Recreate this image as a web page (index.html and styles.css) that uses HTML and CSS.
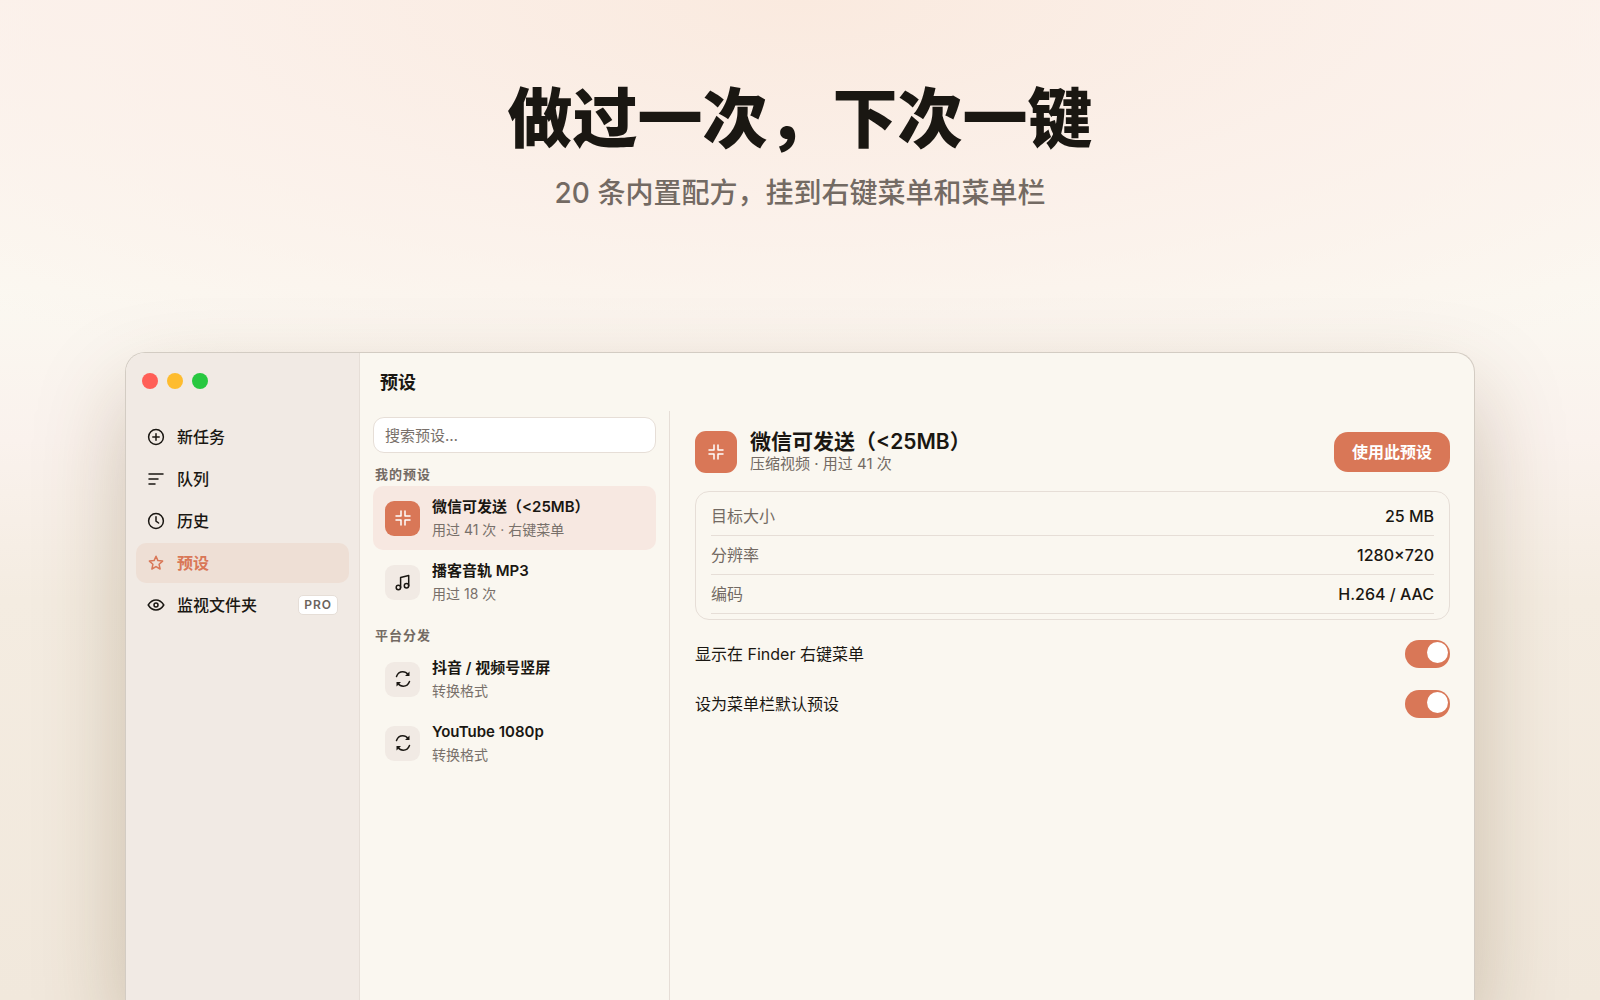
FILE: index.html
```html
<!DOCTYPE html>
<html lang="zh-CN">
  <head>
    <meta charset="utf-8">
    <title>预设</title>
    <link rel="stylesheet" href="styles.css">
  </head>
  <body>
    <svg class="symbols">
      <symbol id="plus" viewBox="0 0 18 18"><circle cx="9" cy="9" r="7.4"/><path d="M9 5.8v6.4M5.8 9h6.4"/></symbol>
      <symbol id="lines" viewBox="0 0 18 18"><path d="M2 4h14M2 9h9M2 14h6"/></symbol>
      <symbol id="clock" viewBox="0 0 18 18"><circle cx="9" cy="9" r="7.4"/><path d="M9 4.8V9.2l2.6 1.8"/></symbol>
      <symbol id="star" viewBox="0 0 18 18"><path d="M9 2.2l1.900 4.400 4.700.5-3.500 3.200 1 4.700L9 12.600 4.900 15l1-4.700-3.500-3.200 4.700-.5z"/></symbol>
      <symbol id="eye" viewBox="0 0 18 18"><path d="M1.200 9C3.300 5.700 6 4 9 4S14.700 5.700 16.800 9C14.700 12.300 12 14 9 14S3.300 12.300 1.200 9z"/><circle cx="9" cy="9" r="2"/></symbol>
      <symbol id="compress" viewBox="0 0 18 18"><path d="M7 2v5H2M11 2v5h5M7 16v-5H2M11 16v-5h5"/></symbol>
      <symbol id="music" viewBox="0 0 18 18"><path d="M6.600 14.500V4.500L14.700 2.500v10.200"/><circle cx="4.400" cy="14.500" r="2.200"/><circle cx="12.500" cy="12.700" r="2.200"/></symbol>
      <symbol id="convert" viewBox="0 0 18 18"><path d="M2.500 6.500C3.600 3.600 5.900 1.800 8.700 1.800c2.200 0 4 .9 5.300 2.700M15.500 11.500c-1.100 2.900-3.400 4.700-6.200 4.700-2.200 0-4-.9-5.300-2.700"/><path class="solid" d="M15.500 1.500V6H11zM2.500 16.500V12H7z"/></symbol>
    </svg>

    <header class="hero">
      <h1>做过一次，下次一键</h1>
      <p>20 条内置配方，挂到右键菜单和菜单栏</p>
    </header>

    <div class="window">
      <aside class="sidebar">
        <div class="lights">
          <span class="light red"></span>
          <span class="light yellow"></span>
          <span class="light green"></span>
        </div>
        <nav class="nav">
          <a href="#"><svg class="icon"><use href="#plus"/></svg>新任务</a>
          <a href="#"><svg class="icon"><use href="#lines"/></svg>队列</a>
          <a href="#"><svg class="icon"><use href="#clock"/></svg>历史</a>
          <a href="#" class="active"><svg class="icon"><use href="#star"/></svg>预设</a>
          <a href="#"><svg class="icon"><use href="#eye"/></svg>监视文件夹<span class="pro">PRO</span></a>
        </nav>
      </aside>

      <main class="main">
        <h2 class="title">预设</h2>
        <div class="content">
          <div class="list">
            <input class="search" type="text" placeholder="搜索预设…" aria-label="搜索预设">

            <h3>我的预设</h3>
            <button class="preset selected">
              <span class="tile accent"><svg class="icon"><use href="#compress"/></svg></span>
              <span class="text"><b>微信可发送（&lt;25MB）</b><small>用过 41 次 · 右键菜单</small></span>
            </button>
            <button class="preset">
              <span class="tile"><svg class="icon"><use href="#music"/></svg></span>
              <span class="text"><b>播客音轨 MP3</b><small>用过 18 次</small></span>
            </button>

            <h3>平台分发</h3>
            <button class="preset">
              <span class="tile"><svg class="icon"><use href="#convert"/></svg></span>
              <span class="text"><b>抖音 / 视频号竖屏</b><small>转换格式</small></span>
            </button>
            <button class="preset">
              <span class="tile"><svg class="icon"><use href="#convert"/></svg></span>
              <span class="text"><b>YouTube 1080p</b><small>转换格式</small></span>
            </button>
          </div>

          <section class="detail">
            <div class="detail-head">
              <span class="tile accent large"><svg class="icon"><use href="#compress"/></svg></span>
              <div class="detail-name">
                <h2>微信可发送（&lt;25MB）</h2>
                <p>压缩视频 · 用过 41 次</p>
              </div>
              <button class="use">使用此预设</button>
            </div>

            <div class="card">
              <table>
                <tr><th scope="row">目标大小</th><td>25 MB</td></tr>
                <tr><th scope="row">分辨率</th><td>1280×720</td></tr>
                <tr><th scope="row">编码</th><td>H.264 / AAC</td></tr>
              </table>
            </div>

            <div class="options">
              <div class="option">
                <label for="finder">显示在 Finder 右键菜单</label>
                <input class="switch" type="checkbox" id="finder" checked>
              </div>
              <div class="option">
                <label for="menubar">设为菜单栏默认预设</label>
                <input class="switch" type="checkbox" id="menubar" checked>
              </div>
            </div>
          </section>
        </div>
      </main>
    </div>
  </body>
</html>
```
FILE: styles.css
```css
* {
  box-sizing: border-box;
}
body {
  margin: 0;
  min-height: 100vh;
  display: flex;
  flex-direction: column;
  font-family: Inter, "Noto Sans CJK SC", sans-serif;
  font-size: 16px;
  line-height: 24px;
  color: #1a1712;
  background:
    radial-gradient(ellipse 75% 42% at 50% 0, #faeadf 0%, rgba(251, 239, 232, 0.8) 50%, rgba(251, 243, 238, 0) 100%),
    linear-gradient(#fbf3ee 0%, #fbf8f1 29%, #faf2ed 44%, #f4ece1 60%, #f1e8dc 100%);
}
h1, h2, h3, p {
  margin: 0;
}
button, input {
  font: inherit;
  color: inherit;
}
.symbols {
  display: none;
}
.icon {
  width: 18px;
  height: 18px;
  flex: none;
  fill: none;
  stroke: currentColor;
  stroke-width: 1.5;
  stroke-linecap: round;
  stroke-linejoin: round;
}
.solid {
  fill: currentColor;
  stroke: none;
}

.hero {
  height: 352px;
  padding-top: 79px;
  text-align: center;
}
.hero h1 {
  font-size: 65px;
  line-height: 80px;
  font-weight: 800;
}
.hero p {
  margin-top: 16px;
  font-size: 28px;
  line-height: 36px;
  font-weight: 500;
  color: #736a63;
}

.window {
  flex: 1;
  display: flex;
  width: calc(100% - 250px);
  margin: 0 auto;
  border: 1px solid #d3ccc3;
  border-bottom: none;
  border-radius: 20px 20px 0 0;
  background: #faf7f0;
  overflow: hidden;
  box-shadow: 0 40px 90px rgba(90, 60, 20, 0.26);
}
.sidebar {
  width: 234px;
  flex: none;
  padding: 20px 10px;
  background: #f1eae4;
  border-right: 1px solid #e6ded7;
}
.lights {
  display: flex;
  gap: 9px;
  padding-left: 6px;
}
.light {
  width: 16px;
  height: 16px;
  border-radius: 50%;
}
.red {
  background: #ff5f57;
}
.yellow {
  background: #febc2e;
}
.green {
  background: #28c840;
}
.nav {
  display: flex;
  flex-direction: column;
  gap: 2px;
  margin-top: 28px;
}
.nav a {
  display: flex;
  align-items: center;
  gap: 12px;
  height: 40px;
  padding: 0 11px;
  border-radius: 10px;
  color: inherit;
  font-weight: 500;
  text-decoration: none;
}
.nav .active {
  background: #eedfd5;
  color: #d97757;
  font-weight: 600;
}
.pro {
  margin-left: auto;
  padding: 0 5px;
  border: 1px solid #e6ded7;
  border-radius: 5px;
  background: #fff;
  color: #6b635c;
  font-size: 12px;
  line-height: 18px;
  font-weight: 600;
  letter-spacing: 1px;
}

.main {
  flex: 1;
  min-width: 0;
  display: flex;
  flex-direction: column;
}
.title {
  height: 58px;
  padding: 0 20px;
  font-size: 18px;
  line-height: 60px;
  font-weight: 600;
}
.content {
  flex: 1;
  display: flex;
}
.list {
  width: 310px;
  flex: none;
  padding: 6px 13px;
  border-right: 1px solid #e6ded7;
}
.search {
  display: block;
  width: 100%;
  height: 36px;
  padding: 0 11px;
  border: 1px solid #e6ded7;
  border-radius: 11px;
  background: #fff;
  font-size: 15px;
}
.search::placeholder {
  color: #78706a;
}
.list h3 {
  margin-top: 9px;
  padding-left: 2px;
  font-size: 13px;
  line-height: 24px;
  font-weight: 600;
  letter-spacing: 1px;
  color: #736a63;
}
.preset {
  display: flex;
  align-items: center;
  gap: 12px;
  width: 100%;
  height: 64px;
  padding: 0 12px;
  border: none;
  border-radius: 10px;
  background: none;
  text-align: left;
}
.selected {
  background: #f7e8e1;
}
.tile {
  display: flex;
  align-items: center;
  justify-content: center;
  width: 35px;
  height: 35px;
  flex: none;
  border-radius: 9px;
  background: #f1eae4;
}
.accent {
  background: #d97757;
  color: #fff;
}
.large {
  width: 42px;
  height: 42px;
  border-radius: 11px;
}
.text b, .text small {
  display: block;
}
.text b {
  font-size: 15px;
  line-height: 24px;
  font-weight: 600;
}
.text small {
  font-size: 14px;
  line-height: 22px;
  color: #78706a;
}

.detail {
  flex: 1;
  padding: 19px 24px 19px 25px;
}
.detail-head {
  display: flex;
  align-items: center;
  gap: 13px;
}
.detail-name {
  flex: 1;
}
.detail-name h2 {
  font-size: 21px;
  line-height: 24px;
  font-weight: 600;
}
.detail-name p {
  font-size: 15px;
  line-height: 20px;
  color: #736a63;
}
.use {
  height: 40px;
  padding: 0 18px;
  border: none;
  border-radius: 14px;
  background: #d97757;
  color: #fff;
  font-weight: 600;
}
.card {
  margin-top: 17px;
  padding: 5px 15px;
  border: 1px solid #e6ded7;
  border-radius: 14px;
}
.card table {
  width: 100%;
  border-spacing: 0;
}
.card th, .card td {
  height: 39px;
  padding: 0;
  border-bottom: 1px solid #e6ded7;
}
.card th {
  text-align: left;
  font-weight: 400;
  color: #736a63;
}
.card td {
  text-align: right;
  font-weight: 500;
}
.options {
  display: flex;
  flex-direction: column;
  gap: 22px;
  margin-top: 20px;
}
.option {
  display: flex;
  align-items: center;
  justify-content: space-between;
  height: 28px;
}
.switch {
  appearance: none;
  width: 45px;
  height: 28px;
  margin: 0;
  padding: 2px;
  border-radius: 14px;
  background: #d8d0c8;
}
.switch::before {
  content: "";
  display: block;
  width: 21px;
  height: 21px;
  border-radius: 50%;
  background: #fff;
}
.switch:checked {
  background: #d97757;
}
.switch:checked::before {
  margin-left: auto;
}
```
